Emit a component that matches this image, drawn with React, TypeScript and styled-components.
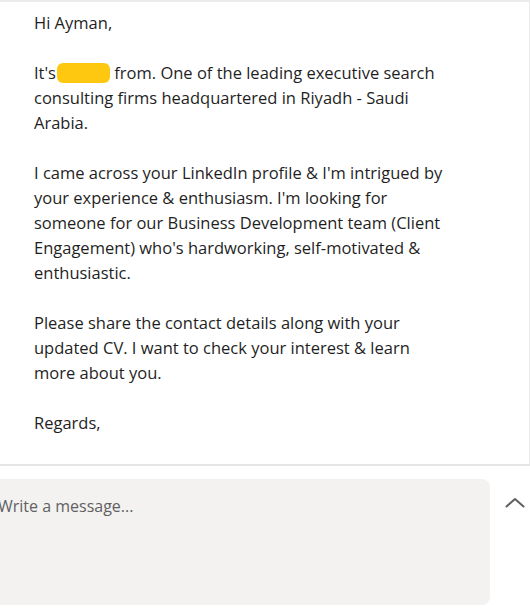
import styled, { createGlobalStyle } from 'styled-components';

const GlobalStyle = createGlobalStyle`
  html, body {
    margin: 0;
    padding: 0;
    background: #ffffff;
  }
  body {
    font-family: 'Open Sans', 'Noto Sans', sans-serif;
    overflow: hidden;
  }
`;

const Page = styled.div`
  width: 530px;
  height: 614px;
  display: flex;
  flex-direction: column;
  background: #ffffff;
`;

const Thread = styled.div`
  height: 464px;
  border-top: 2px solid #ebebeb;
  border-right: 1px solid #ebebeb;
  box-sizing: border-box;
  padding: 8px 20px 0 34px;
`;

const Paragraph = styled.p`
  margin: 0 0 25px;
  font-size: 16.5px;
  line-height: 25px;
  color: #1f1f1f;
  white-space: nowrap;
`;

const Redacted = styled.span`
  display: inline-block;
  width: 53px;
  height: 20px;
  margin: 0 0 0 1px;
  vertical-align: -4px;
  border-radius: 6px;
  background: #fec811;
`;

const Divider = styled.div`
  height: 2px;
  background: #e6e6e6;
`;

const Composer = styled.div`
  display: flex;
  align-items: flex-start;
  padding-top: 13px;
  margin-left: -12px;
`;

const InputBox = styled.div`
  width: 502px;
  height: 126px;
  border-radius: 8px;
  background: #f3f2f1;
  box-sizing: border-box;
  padding: 15px 0 0 10px;
  font-size: 16px;
  line-height: 25px;
  color: #616161;
`;

const ToggleButton = styled.button`
  border: none;
  background: transparent;
  padding: 0;
  margin: 18px 0 0 15px;
  width: 20px;
  height: 12px;
  display: flex;
  align-items: center;
  justify-content: center;
`;

const ChevronUp = () => (
  <svg width="20" height="12" viewBox="0 0 20 12" fill="none">
    <path d="M1.5 9.5 L10 2 L18.5 9.5" stroke="#5f5f5f" strokeWidth="2" strokeLinecap="round" strokeLinejoin="round" />
  </svg>
);

export default function App() {
  return (
    <Page>
      <GlobalStyle />
      <Thread>
        <Paragraph>Hi Ayman,</Paragraph>
        <Paragraph>
          It's<Redacted /> from. One of the leading executive search
          <br />
          consulting firms headquartered in Riyadh - Saudi
          <br />
          Arabia.
        </Paragraph>
        <Paragraph>
          I came across your LinkedIn profile &amp; I'm intrigued by
          <br />
          your experience &amp; enthusiasm. I'm looking for
          <br />
          someone for our Business Development team (Client
          <br />
          Engagement) who's hardworking, self-motivated &amp;
          <br />
          enthusiastic.
        </Paragraph>
        <Paragraph>
          Please share the contact details along with your
          <br />
          updated CV. I want to check your interest &amp; learn
          <br />
          more about you.
        </Paragraph>
        <Paragraph>Regards,</Paragraph>
      </Thread>
      <Divider />
      <Composer>
        <InputBox>Write a message...</InputBox>
        <ToggleButton aria-label="Expand">
          <ChevronUp />
        </ToggleButton>
      </Composer>
    </Page>
  );
}
